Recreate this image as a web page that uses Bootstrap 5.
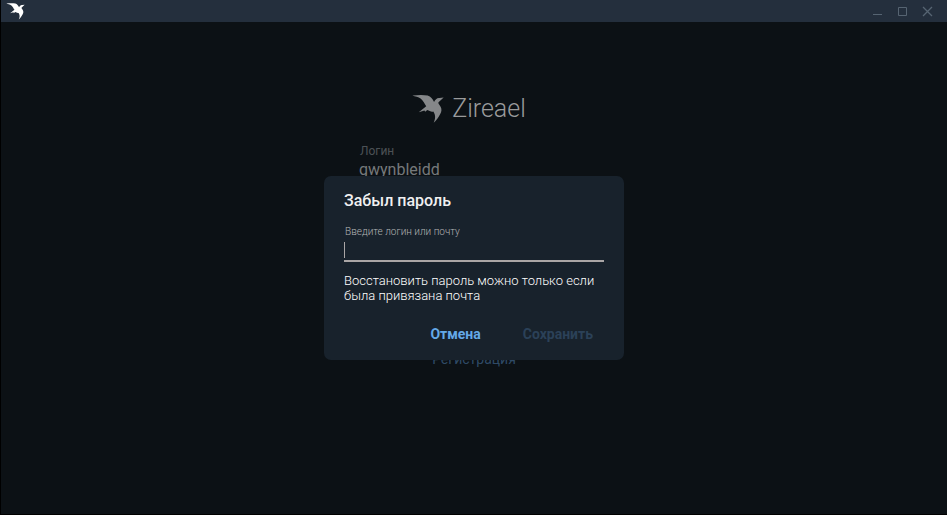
<!DOCTYPE html>
<html lang="ru" data-bs-theme="dark">
<head>
<meta charset="utf-8">
<meta name="viewport" content="width=device-width, initial-scale=1">
<title>Zireael</title>
<link href="https://cdn.jsdelivr.net/npm/bootstrap@5.3.0/dist/css/bootstrap.min.css" rel="stylesheet">
<style>
  body { background: #0c1115; color: #858789; font-family: Roboto, "Liberation Sans", sans-serif; border-left: 1px solid #000; border-bottom: 1px solid #000; }
  .titlebar { background: #242f3d; height: 22px; padding: 0 7px 0 5px; }
  .titlebar .bird { width: 19px; height: 17px; color: #fff; }
  .win-btn { width: 25px; height: 22px; color: #566472; border-radius: 0; }
  .login-form { width: 230px; padding-top: 70px; }
  .brand { padding-right: 10px; }
  .brand .bird { width: 32px; height: 30px; color: #858789; }
  .brand-name { font-size: 25px; font-weight: 300; line-height: 34px; color: #9a9b9c; }
  .login-label { font-size: 12px; line-height: 16px; color: #4c5155; margin-top: 17px; padding-left: 1px; }
  .login-input { font-size: 16px; line-height: 22px; color: #76797b; background: none; }
  .register { font-size: 14px; line-height: 16px; color: #2f4a66; margin-top: 170px; }
  .recover { width: 300px; background: #18222c; border-radius: 7px; padding: 15px 20px 10px; }
  .recover-title { font-size: 16px; font-weight: 500; line-height: 20px; color: #f0f0f1; }
  .recover-label { font-size: 10px; font-weight: 300; line-height: 12px; color: #b4b5b6; padding-left: 1px; margin-top: 15px; }
  .recover-field { border-bottom: 2px solid #aaa6a6; height: 24px; }
  .recover-field::before { content: ""; position: absolute; left: 0; top: 4px; width: 1px; height: 16px; background: #aaa6a6; }
  .recover-input { background: none; font-size: 14px; line-height: 20px; color: #fff; caret-color: transparent; }
  .recover-note { font-size: 13px; font-weight: 300; line-height: 15px; color: #fff; margin-top: 11px; }
  .recover-actions { gap: 22px; margin-top: 15px; padding-right: 1px; }
  .act { font-size: 14px; font-weight: 700; line-height: 20px; padding: 6px 10px; color: #64a9e8; }
  .act:disabled { color: #2b4158; opacity: 1; border: 0; }
  .layer { z-index: 2; }
</style>
<script src="https://cdn.jsdelivr.net/npm/bootstrap@5.3.0/dist/js/bootstrap.bundle.min.js" defer></script>
</head>
<body class="d-flex flex-column min-vh-100">
<svg class="d-none" aria-hidden="true">
  <symbol id="bird" viewBox="37 33 90 82">
    <path fill="currentColor" d="M38 36C56 34 70 34 81 36C90 39 95 46 99 54C102 47 108 42 114 43L126 42L111 56C111 60 114 62 117 67C121 74 121 81 116 89C111 99 105 107 98 113C103 101 104 92 97 81C91 83 86 79 80 77L74 82L72 78L56 83L77 66C72 58 69 51 62 45C55 40 46 39 38 36Z"/>
  </symbol>
</svg>
<header class="titlebar d-flex align-items-center justify-content-between">
  <svg class="bird" aria-hidden="true"><use href="#bird"/></svg>
  <div class="d-flex">
    <button type="button" class="win-btn btn border-0 p-0 d-flex align-items-center justify-content-center" aria-label="Свернуть"><svg width="11" height="11" viewBox="0 0 11 11" fill="none" stroke="currentColor"><path d="M1 8.500H10"/></svg></button>
    <button type="button" class="win-btn btn border-0 p-0 d-flex align-items-center justify-content-center" aria-label="Развернуть"><svg width="11" height="11" viewBox="0 0 11 11" fill="none" stroke="currentColor"><path d="M1.500 1.500H9.500V9.500H1.500Z"/></svg></button>
    <button type="button" class="win-btn btn border-0 p-0 d-flex align-items-center justify-content-center" aria-label="Закрыть"><svg width="11" height="11" viewBox="0 0 11 11" fill="none" stroke="currentColor" stroke-width="1.300"><path d="M1 1L10 10M10 1L1 10"/></svg></button>
  </div>
</header>
<main class="position-relative flex-grow-1">
  <form class="login-form mx-auto d-flex flex-column">
    <h1 class="brand d-flex align-items-center justify-content-center gap-2 m-0">
      <svg class="bird" aria-hidden="true"><use href="#bird"/></svg>
      <span class="brand-name">Zireael</span>
    </h1>
    <label class="login-label" for="login">Логин</label>
    <input class="login-input border-0 p-0 w-100" id="login" type="text" value="gwynbleidd">
    <a class="register text-center text-decoration-none" href="#register">Регистрация</a>
  </form>
  <div class="layer position-absolute top-0 start-0 w-100 h-100 d-flex align-items-center justify-content-center">
    <form class="recover" role="dialog" aria-modal="true" aria-labelledby="recoverTitle">
      <h2 class="recover-title m-0" id="recoverTitle">Забыл пароль</h2>
      <label class="recover-label d-block" for="recover">Введите логин или почту</label>
      <div class="recover-field position-relative">
        <input class="recover-input border-0 p-0 w-100 d-block shadow-none" id="recover" type="text">
      </div>
      <p class="recover-note mb-0">Восстановить пароль можно только если была привязана почта</p>
      <div class="recover-actions d-flex justify-content-end">
        <button type="button" class="act btn border-0">Отмена</button>
        <button type="submit" class="act btn border-0" disabled>Сохранить</button>
      </div>
    </form>
  </div>
</main>
</body>
</html>
